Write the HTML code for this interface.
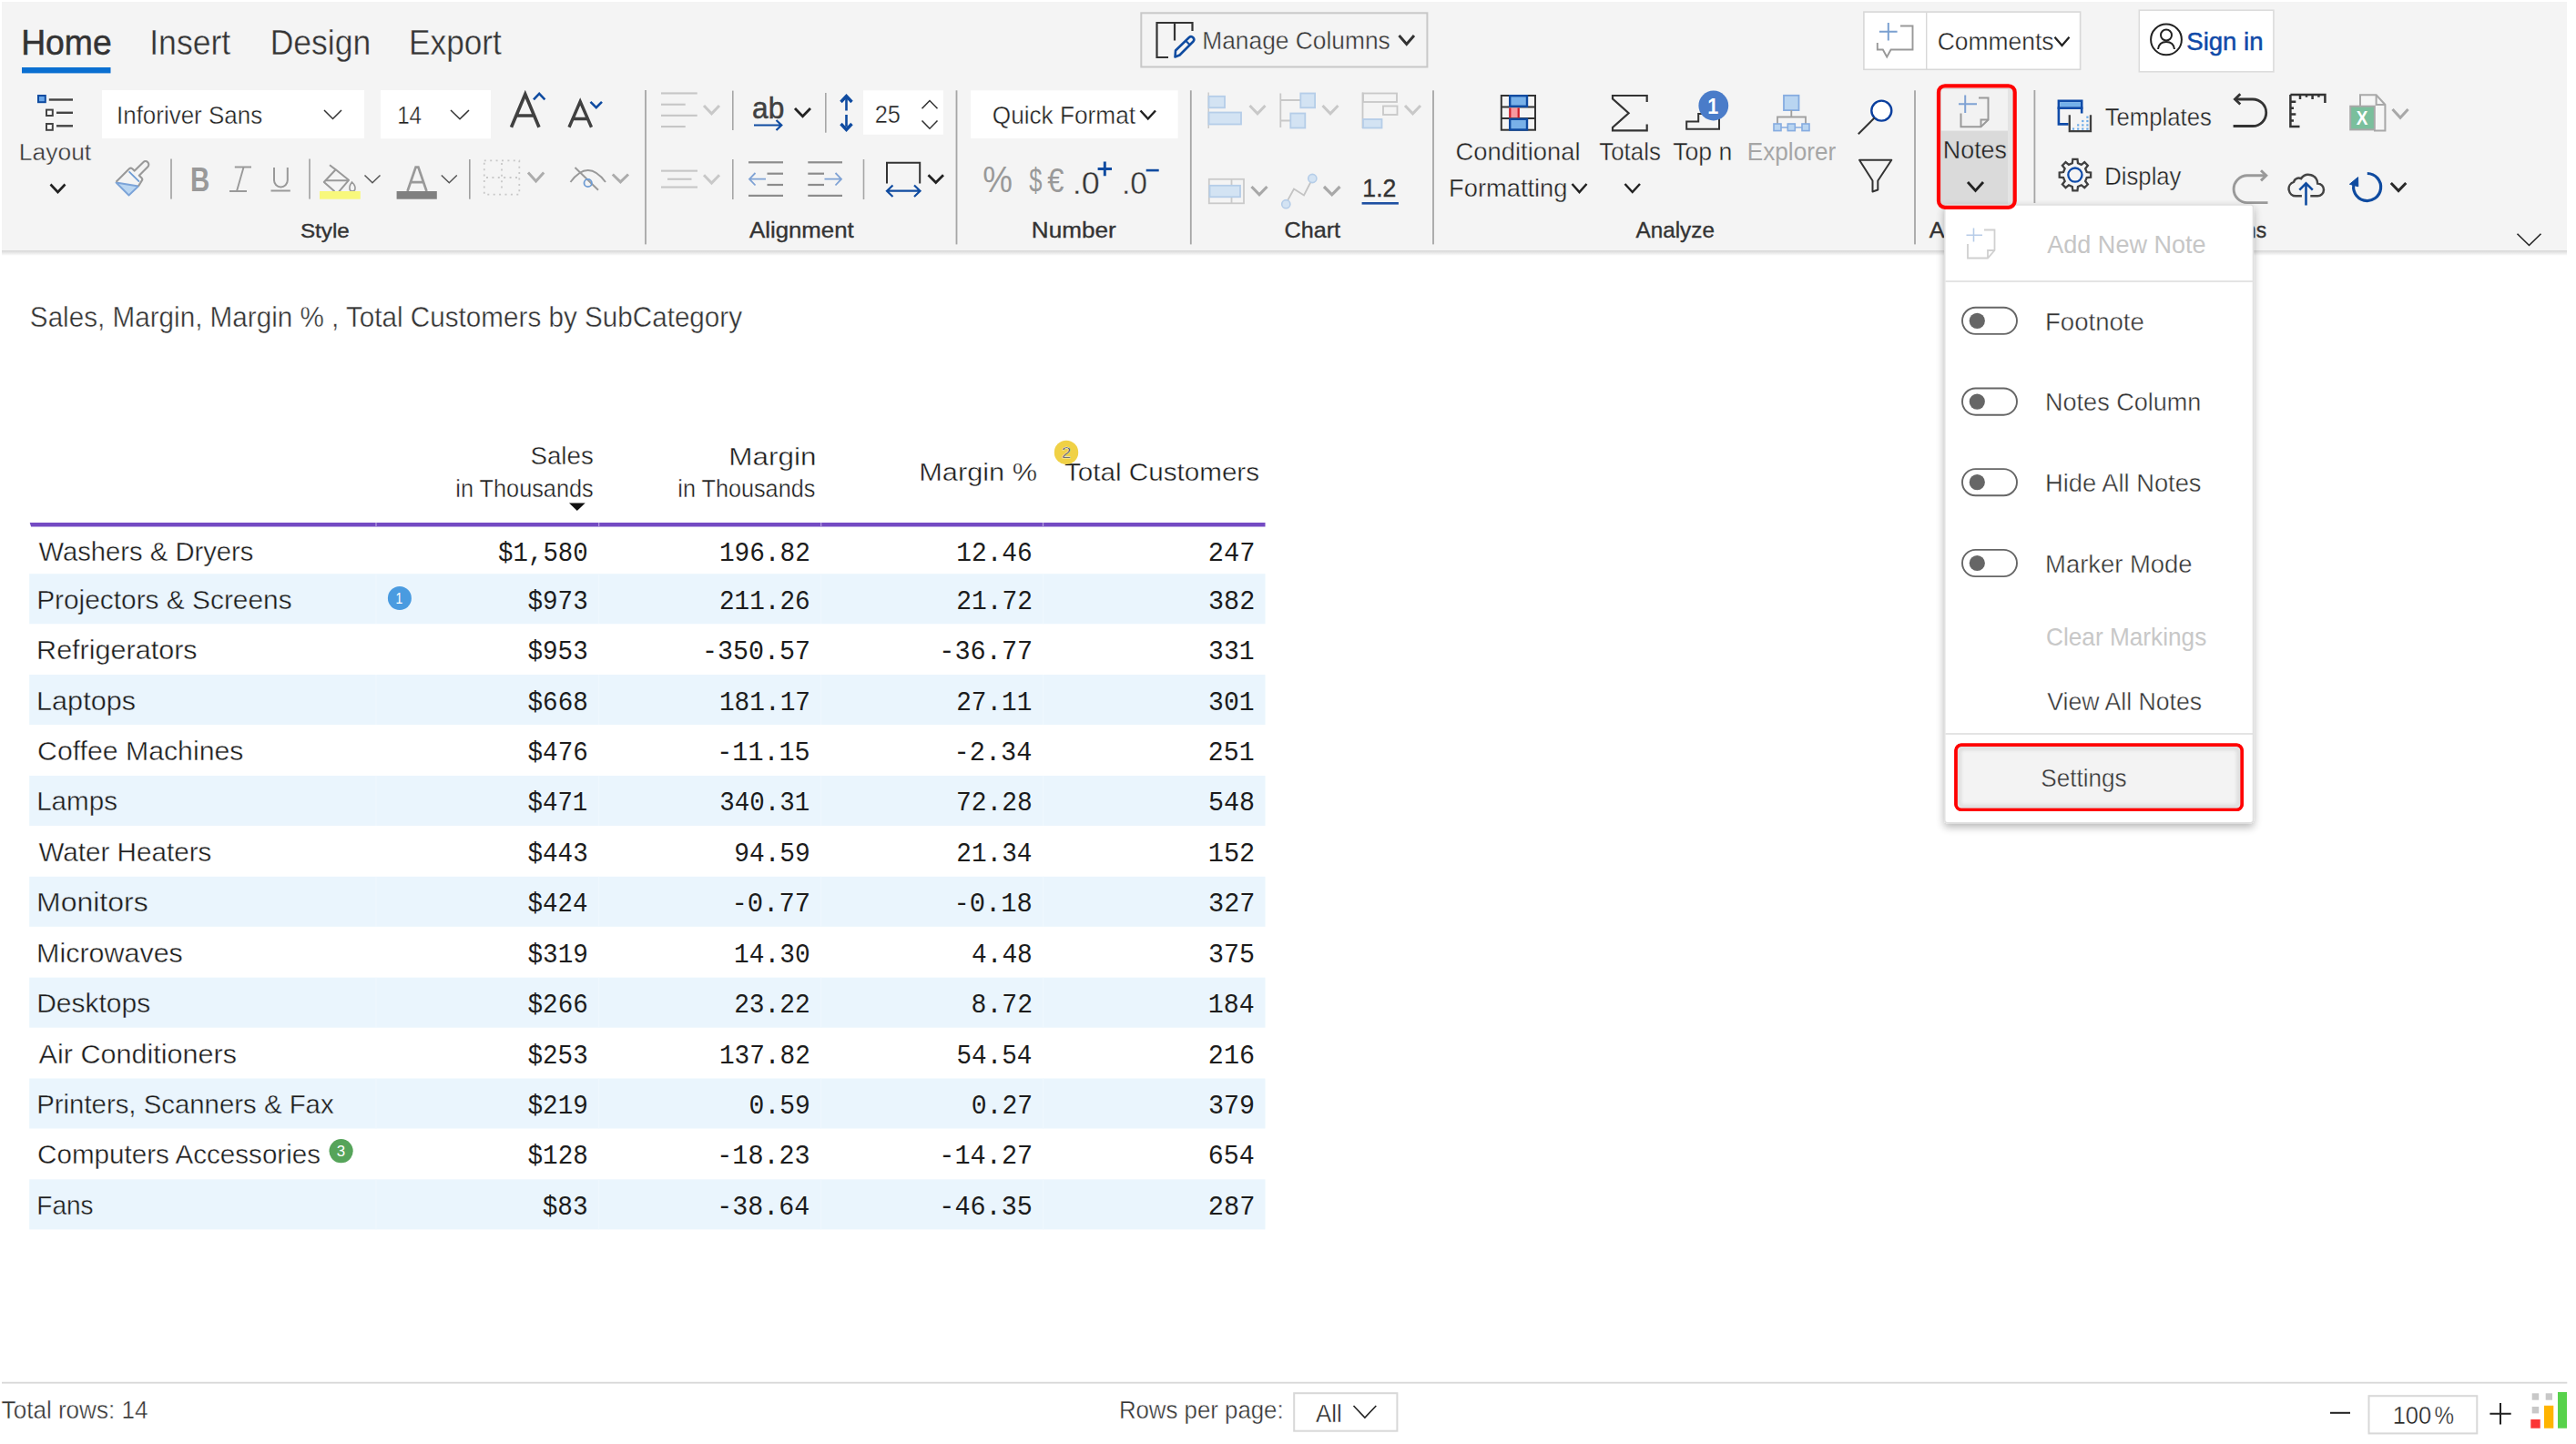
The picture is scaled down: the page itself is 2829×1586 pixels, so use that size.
<!DOCTYPE html><html><head><meta charset="utf-8"><title>Inforiver Notes</title><style>html,body{margin:0;padding:0;background:#fff;width:2829px;height:1586px;overflow:hidden;font-family:"Liberation Sans",sans-serif}</style></head><body><svg width="2829" height="1586" viewBox="0 0 2829 1586" style="display:block;position:absolute;left:0;top:0"><rect x="0.00" y="0.00" width="2829.00" height="1586.00" fill="#ffffff" stroke="none" stroke-width="1.00" rx="0.00"/>
<defs><linearGradient id="shd" x1="0" y1="0" x2="0" y2="1"><stop offset="0" stop-color="#000" stop-opacity="0.16"/><stop offset="1" stop-color="#000" stop-opacity="0"/></linearGradient><filter id="pshadow" x="-20%" y="-10%" width="140%" height="125%"><feGaussianBlur in="SourceAlpha" stdDeviation="5"/><feOffset dx="0" dy="4"/><feComponentTransfer><feFuncA type="linear" slope="0.3"/></feComponentTransfer><feMerge><feMergeNode/><feMergeNode in="SourceGraphic"/></feMerge></filter></defs>
<rect x="2.00" y="2.00" width="2817.00" height="273.00" fill="#f4f4f4" stroke="none" stroke-width="1.00" rx="0.00"/>
<rect x="2.00" y="275.00" width="2817.00" height="6.00" fill="url(#shd)" stroke="none" stroke-width="1.00" rx="0.00"/>
<text x="23.14" y="60.30" font-family='"Liberation Sans", sans-serif' font-weight="400" font-size="38.52" fill="#333333" textLength="99.52" lengthAdjust="spacingAndGlyphs" stroke="#333" stroke-width="0.55">Home</text>
<rect x="24.00" y="74.00" width="97.50" height="6.40" fill="#0a6fd1" stroke="none" stroke-width="1.00" rx="0.00"/>
<text x="164.21" y="60.30" font-family='"Liberation Sans", sans-serif' font-weight="400" font-size="38.52" fill="#333333" textLength="89.05" lengthAdjust="spacingAndGlyphs" stroke="#f4f4f4" stroke-width="0.40">Insert</text>
<text x="296.68" y="60.30" font-family='"Liberation Sans", sans-serif' font-weight="400" font-size="38.52" fill="#333333" textLength="110.62" lengthAdjust="spacingAndGlyphs" stroke="#f4f4f4" stroke-width="0.40">Design</text>
<text x="449.11" y="60.30" font-family='"Liberation Sans", sans-serif' font-weight="400" font-size="38.52" fill="#333333" textLength="101.75" lengthAdjust="spacingAndGlyphs" stroke="#f4f4f4" stroke-width="0.40">Export</text>
<rect x="1253.30" y="14.30" width="314.10" height="59.20" fill="#f4f4f4" stroke="#c8c8c8" stroke-width="2.00" rx="0.00"/>
<path d="M1283 63H1270.5V25H1309.5V34M1290 25V44.5" stroke="#333333" stroke-width="2.20" fill="none"/>
<path d="M1290.5 62.5L1291 55.5L1306 41A3.2 3.2 0 0 1 1310.5 45.5L1295.5 60.5Z" stroke="#0f4ba0" stroke-width="2.60" fill="none" stroke-linejoin="round"/>
<path d="M1302 44.5L1307 49.5" stroke="#0f4ba0" stroke-width="2.20" fill="none"/>
<text x="1320.24" y="53.80" font-family='"Liberation Sans", sans-serif' font-weight="400" font-size="27.62" fill="#333333" textLength="206.51" lengthAdjust="spacingAndGlyphs" stroke="#f4f4f4" stroke-width="0.40">Manage Columns</text>
<path d="M1536.50 39.00L1544.75 48.50L1553.00 39.00" stroke="#333333" stroke-width="3.00" fill="none" stroke-linecap="butt" stroke-linejoin="miter"/>
<rect x="2046.90" y="13.10" width="237.70" height="63.20" fill="#ffffff" stroke="#d8d8d8" stroke-width="1.60" rx="0.00"/>
<rect x="2115.00" y="14.00" width="1.40" height="62.00" fill="#d8d8d8" stroke="none" stroke-width="1.00" rx="0.00"/>
<path d="M2073.8 25V44.5M2063.9 34.8H2083.6" stroke="#7aa0d0" stroke-width="2.00" fill="none"/>
<path d="M2087 28.5H2100.5V54.5H2076.6L2072.2 62.5L2067.8 54.5H2061.8V47" stroke="#999" stroke-width="1.90" fill="none" stroke-linejoin="miter"/>
<text x="2127.66" y="54.80" font-family='"Liberation Sans", sans-serif' font-weight="400" font-size="27.62" fill="#222" textLength="127.80" lengthAdjust="spacingAndGlyphs" stroke="#ffffff" stroke-width="0.40">Comments</text>
<path d="M2256.50 40.80L2264.50 50.00L2272.50 40.80" stroke="#222" stroke-width="2.30" fill="none" stroke-linecap="butt" stroke-linejoin="miter"/>
<rect x="2349.30" y="11.20" width="147.60" height="67.60" fill="#ffffff" stroke="#dcdcdc" stroke-width="1.60" rx="0.00"/>
<circle cx="2379" cy="43.4" r="16.9" fill="none" stroke="#222" stroke-width="2"/>
<circle cx="2379" cy="38.5" r="6" fill="none" stroke="#222" stroke-width="2"/>
<path d="M2370 54Q2371 46 2379 46Q2387 46 2388 54" stroke="#222" stroke-width="2.00" fill="none"/>
<text x="2401.25" y="55.20" font-family='"Liberation Sans", sans-serif' font-weight="400" font-size="28.20" fill="#0f4aa8" textLength="84.24" lengthAdjust="spacingAndGlyphs" stroke="#0f4aa8" stroke-width="0.5">Sign in</text>
<rect x="42.00" y="105.00" width="7.80" height="7.20" fill="#6aa6e8" stroke="#0f4ba0" stroke-width="2.00" rx="0.00"/>
<rect x="53.80" y="108.30" width="26.20" height="2.40" fill="#444" stroke="none" stroke-width="1.00" rx="0.00"/>
<rect x="51.00" y="120.60" width="6.80" height="6.40" fill="#fff" stroke="#444" stroke-width="2.00" rx="0.00"/>
<rect x="62.00" y="122.60" width="18.00" height="2.40" fill="#444" stroke="none" stroke-width="1.00" rx="0.00"/>
<rect x="51.00" y="136.00" width="6.80" height="6.80" fill="#fff" stroke="#444" stroke-width="2.00" rx="0.00"/>
<rect x="62.00" y="137.10" width="18.00" height="2.40" fill="#444" stroke="none" stroke-width="1.00" rx="0.00"/>
<text x="20.83" y="176.00" font-family='"Liberation Sans", sans-serif' font-weight="400" font-size="26.45" fill="#333333" textLength="79.36" lengthAdjust="spacingAndGlyphs" stroke="#f4f4f4" stroke-width="0.40">Layout</text>
<path d="M55.50 202.50L63.50 211.00L71.50 202.50" stroke="#222" stroke-width="2.60" fill="none" stroke-linecap="butt" stroke-linejoin="miter"/>
<rect x="112.00" y="99.00" width="288.00" height="53.00" fill="#ffffff" stroke="none" stroke-width="1.00" rx="0.00"/>
<text x="128.00" y="135.70" font-family='"Liberation Sans", sans-serif' font-weight="400" font-size="27.91" fill="#222" textLength="160.13" lengthAdjust="spacingAndGlyphs" stroke="#ffffff" stroke-width="0.40">Inforiver Sans</text>
<path d="M356.00 121.00L365.50 130.50L375.00 121.00" stroke="#333" stroke-width="1.50" fill="none" stroke-linecap="butt" stroke-linejoin="miter"/>
<rect x="418.00" y="99.00" width="121.00" height="53.30" fill="#ffffff" stroke="none" stroke-width="1.00" rx="0.00"/>
<text x="436.15" y="136.00" font-family='"Liberation Sans", sans-serif' font-weight="400" font-size="27.62" fill="#222" textLength="26.96" lengthAdjust="spacingAndGlyphs" stroke="#ffffff" stroke-width="0.40">14</text>
<path d="M495.00 121.00L505.00 130.80L515.00 121.00" stroke="#333" stroke-width="1.50" fill="none" stroke-linecap="butt" stroke-linejoin="miter"/>
<path d="M561.5 139.7L576.8 103.5L592 139.7M566.8 127H587" stroke="#404040" stroke-width="3.60" fill="none"/>
<path d="M586 109.3L592.2 102.8L598.4 109.3" stroke="#0f4ba0" stroke-width="2.60" fill="none"/>
<path d="M625 139.7L637.2 111.5L649.5 139.7M629 130.5H645.5" stroke="#404040" stroke-width="3.40" fill="none"/>
<path d="M648.5 111.8L654.8 118.2L661 111.8" stroke="#0f4ba0" stroke-width="2.60" fill="none"/>
<path d="M127.5 200.5L152 204.5L141.5 214.5Z" stroke="#7ba3d8" stroke-width="1.80" fill="#b9d5f1" stroke-linejoin="round"/>
<path d="M127.5 199.8L142 185.3Q143.6 184 145.2 185.3L147.8 187.6L157.3 178.2A3.5 3.5 0 0 1 162.3 183.2L152.8 192.7L155.6 195.4Q157 197 155.6 198.6L152 204.5" stroke="#999" stroke-width="2.10" fill="none" stroke-linejoin="round"/>
<path d="M141.6 188.3L153 199.6" stroke="#6d9bd3" stroke-width="1.80" fill="none"/>
<rect x="187.20" y="174.50" width="1.60" height="44.10" fill="#a0a0a0" stroke="none" stroke-width="1.00" rx="0.00"/>
<text x="209.03" y="209.50" font-family='"Liberation Sans", sans-serif' font-weight="700" font-size="37.06" fill="#999" textLength="21.31" lengthAdjust="spacingAndGlyphs">B</text>
<path d="M257.8 183.5H276M252 210H271M267.6 183.5L260 210" stroke="#999" stroke-width="1.90" fill="none"/>
<path d="M301 184V198A7.4 7.4 0 0 0 315.8 198V184M297.5 209.5H318.8" stroke="#999" stroke-width="2.00" fill="none"/>
<rect x="339.20" y="174.50" width="1.60" height="44.10" fill="#a0a0a0" stroke="none" stroke-width="1.00" rx="0.00"/>
<path d="M367.5 210.3L355.8 200L368.7 186.2L383 197.8L372.3 210.3" stroke="#999" stroke-width="2.00" fill="none" stroke-linejoin="round"/>
<path d="M357.5 198.3H382.5M362 181.2L368.7 186.4" stroke="#999" stroke-width="2.00" fill="none"/>
<path d="M386.5 200Q383.5 204 384 207A3 3 0 0 0 390 207Q390.5 204 386.5 200Z" stroke="#999" stroke-width="1.60" fill="none"/>
<rect x="351.00" y="210.00" width="44.80" height="8.70" fill="#f8f87c" stroke="none" stroke-width="1.00" rx="0.00"/>
<path d="M400.50 192.50L409.00 200.80L417.50 192.50" stroke="#555" stroke-width="1.50" fill="none" stroke-linecap="butt" stroke-linejoin="miter"/>
<path d="M447.5 210L456.6 183.6H459.4L468.5 210M450.5 200.2H465.5" stroke="#999" stroke-width="2.70" fill="none"/>
<rect x="435.60" y="210.00" width="44.20" height="8.70" fill="#808080" stroke="none" stroke-width="1.00" rx="0.00"/>
<path d="M484.80 192.50L493.30 200.80L501.80 192.50" stroke="#555" stroke-width="1.50" fill="none" stroke-linecap="butt" stroke-linejoin="miter"/>
<rect x="515.00" y="175.00" width="1.60" height="43.70" fill="#a0a0a0" stroke="none" stroke-width="1.00" rx="0.00"/>
<rect x="531.80" y="176.40" width="38.50" height="37.30" fill="none" stroke="#c8c8c8" stroke-width="1.80" rx="0.00" stroke-dasharray="2 4.4"/>
<path d="M551 179V211M534 195H568" stroke="#c8c8c8" stroke-width="1.80" fill="none" stroke-dasharray="2 4.4"/>
<path d="M580.00 189.50L588.60 199.00L597.20 189.50" stroke="#acacac" stroke-width="3.00" fill="none" stroke-linecap="butt" stroke-linejoin="miter"/>
<path d="M626.5 200Q645.7 174 665 200" stroke="#999" stroke-width="1.90" fill="none"/>
<path d="M631.5 184L657 208.8" stroke="#999" stroke-width="1.90" fill="none"/>
<circle cx="645.7" cy="201" r="4.2" fill="none" stroke="#6d9bd3" stroke-width="1.8"/>
<path d="M672.80 191.50L681.40 199.80L690.00 191.50" stroke="#acacac" stroke-width="3.00" fill="none" stroke-linecap="butt" stroke-linejoin="miter"/>
<text x="329.90" y="260.50" font-family='"Liberation Sans", sans-serif' font-weight="400" font-size="22.67" fill="#333333" textLength="53.98" lengthAdjust="spacingAndGlyphs" stroke="#333" stroke-width="0.35">Style</text>
<rect x="708.10" y="99.00" width="1.80" height="169.40" fill="#a6a6a6" stroke="none" stroke-width="1.00" rx="0.00"/>
<rect x="726.00" y="101.40" width="39.70" height="2.10" fill="#c6c6c6" stroke="none" stroke-width="1.00" rx="0.00"/>
<rect x="726.00" y="113.70" width="26.70" height="2.10" fill="#c6c6c6" stroke="none" stroke-width="1.00" rx="0.00"/>
<rect x="726.00" y="125.80" width="39.70" height="2.10" fill="#c6c6c6" stroke="none" stroke-width="1.00" rx="0.00"/>
<rect x="726.00" y="138.00" width="26.70" height="2.10" fill="#c6c6c6" stroke="none" stroke-width="1.00" rx="0.00"/>
<path d="M773.00 116.00L781.50 124.80L790.00 116.00" stroke="#c8c8c8" stroke-width="3.00" fill="none" stroke-linecap="butt" stroke-linejoin="miter"/>
<rect x="804.00" y="99.60" width="1.60" height="43.40" fill="#a6a6a6" stroke="none" stroke-width="1.00" rx="0.00"/>
<text x="826.05" y="129.60" font-family='"Liberation Sans", sans-serif' font-weight="400" font-size="33.43" fill="#404040" textLength="35.28" lengthAdjust="spacingAndGlyphs" stroke="#404040" stroke-width="0.5">ab</text>
<path d="M828 137.5H858M852.5 132L858.3 137.5L852.5 143" stroke="#0f4ba0" stroke-width="2.20" fill="none"/>
<path d="M873.00 119.00L881.50 127.80L890.00 119.00" stroke="#222" stroke-width="2.80" fill="none" stroke-linecap="butt" stroke-linejoin="miter"/>
<rect x="906.00" y="102.00" width="1.60" height="43.70" fill="#a6a6a6" stroke="none" stroke-width="1.00" rx="0.00"/>
<path d="M929.5 108V121.5M929.5 126V139.5" stroke="#0f4ba0" stroke-width="2.60" fill="none"/>
<path d="M923.5 112L929.5 105.5L935.5 112M923.5 136L929.5 142.5L935.5 136" stroke="#0f4ba0" stroke-width="3.40" fill="none"/>
<rect x="948.00" y="99.30" width="88.00" height="48.50" fill="#ffffff" stroke="none" stroke-width="1.00" rx="0.00"/>
<text x="960.72" y="135.20" font-family='"Liberation Sans", sans-serif' font-weight="400" font-size="27.91" fill="#222" textLength="28.24" lengthAdjust="spacingAndGlyphs" stroke="#ffffff" stroke-width="0.40">25</text>
<path d="M1012.5 119.3L1021 110.5L1029.5 119.3M1012.5 132.5L1021 141.2L1029.5 132.5" stroke="#333" stroke-width="1.50" fill="none"/>
<rect x="1049.60" y="99.30" width="1.80" height="169.10" fill="#a6a6a6" stroke="none" stroke-width="1.00" rx="0.00"/>
<rect x="726.00" y="186.60" width="40.00" height="2.10" fill="#c6c6c6" stroke="none" stroke-width="1.00" rx="0.00"/>
<rect x="733.00" y="195.70" width="26.50" height="2.10" fill="#c6c6c6" stroke="none" stroke-width="1.00" rx="0.00"/>
<rect x="726.00" y="204.50" width="40.00" height="2.10" fill="#c6c6c6" stroke="none" stroke-width="1.00" rx="0.00"/>
<path d="M773.00 192.30L781.50 201.00L790.00 192.30" stroke="#c8c8c8" stroke-width="3.00" fill="none" stroke-linecap="butt" stroke-linejoin="miter"/>
<rect x="804.00" y="175.00" width="1.60" height="44.00" fill="#a6a6a6" stroke="none" stroke-width="1.00" rx="0.00"/>
<rect x="822.00" y="177.20" width="38.00" height="2.20" fill="#8c8c8c" stroke="none" stroke-width="1.00" rx="0.00"/>
<rect x="842.50" y="189.60" width="17.50" height="2.20" fill="#8c8c8c" stroke="none" stroke-width="1.00" rx="0.00"/>
<rect x="842.50" y="201.90" width="17.50" height="2.20" fill="#8c8c8c" stroke="none" stroke-width="1.00" rx="0.00"/>
<rect x="822.00" y="213.80" width="38.00" height="2.20" fill="#8c8c8c" stroke="none" stroke-width="1.00" rx="0.00"/>
<path d="M823 196.7H841M829.5 190L823 196.7L829.5 203.5" stroke="#7fa2d4" stroke-width="1.80" fill="none"/>
<rect x="887.30" y="177.20" width="37.70" height="2.20" fill="#8c8c8c" stroke="none" stroke-width="1.00" rx="0.00"/>
<rect x="887.30" y="189.60" width="17.70" height="2.20" fill="#8c8c8c" stroke="none" stroke-width="1.00" rx="0.00"/>
<rect x="887.30" y="201.90" width="17.70" height="2.20" fill="#8c8c8c" stroke="none" stroke-width="1.00" rx="0.00"/>
<rect x="887.30" y="213.80" width="37.70" height="2.20" fill="#8c8c8c" stroke="none" stroke-width="1.00" rx="0.00"/>
<path d="M905.5 196.7H924M917.5 190L924 196.7L917.5 203.5" stroke="#7fa2d4" stroke-width="1.80" fill="none"/>
<rect x="947.70" y="175.00" width="1.60" height="44.00" fill="#a6a6a6" stroke="none" stroke-width="1.00" rx="0.00"/>
<path d="M974 201.5V178.7H1010.2V201.5" stroke="#333" stroke-width="2.00" fill="none"/>
<path d="M974.5 209.7H1010M980.5 203.5L974 209.7L980.5 216M1004 203.5L1010.5 209.7L1004 216" stroke="#0f4ba0" stroke-width="2.20" fill="none"/>
<path d="M1019.50 192.30L1027.75 200.50L1036.00 192.30" stroke="#222" stroke-width="2.80" fill="none" stroke-linecap="butt" stroke-linejoin="miter"/>
<text x="822.95" y="261.00" font-family='"Liberation Sans", sans-serif' font-weight="400" font-size="24.42" fill="#333333" textLength="114.84" lengthAdjust="spacingAndGlyphs" stroke="#333" stroke-width="0.35">Alignment</text>
<rect x="1066.00" y="99.30" width="227.60" height="52.70" fill="#ffffff" stroke="none" stroke-width="1.00" rx="0.00"/>
<text x="1089.76" y="135.90" font-family='"Liberation Sans", sans-serif' font-weight="400" font-size="27.62" fill="#222" textLength="157.23" lengthAdjust="spacingAndGlyphs" stroke="#ffffff" stroke-width="0.40">Quick Format</text>
<path d="M1252.50 121.50L1260.75 130.50L1269.00 121.50" stroke="#222" stroke-width="2.50" fill="none" stroke-linecap="butt" stroke-linejoin="miter"/>
<text x="1079.19" y="210.70" font-family='"Liberation Sans", sans-serif' font-weight="400" font-size="41.43" fill="#999" textLength="32.72" lengthAdjust="spacingAndGlyphs">%</text>
<text x="1130.23" y="210.70" font-family='"Liberation Sans", sans-serif' font-weight="400" font-size="37.79" fill="#999" textLength="14.18" lengthAdjust="spacingAndGlyphs">$</text>
<text x="1150.14" y="210.70" font-family='"Liberation Sans", sans-serif' font-weight="400" font-size="37.79" fill="#999" textLength="18.22" lengthAdjust="spacingAndGlyphs">€</text>
<text x="1177.72" y="212.80" font-family='"Liberation Sans", sans-serif' font-weight="400" font-size="35.61" fill="#333" textLength="29.99" lengthAdjust="spacingAndGlyphs" stroke="#f4f4f4" stroke-width="0.40">.0</text>
<path d="M1205.6 185.5H1221M1213.3 177.5V193.3" stroke="#0f4ba0" stroke-width="3.00" fill="none"/>
<text x="1231.92" y="212.80" font-family='"Liberation Sans", sans-serif' font-weight="400" font-size="35.61" fill="#333" textLength="28.09" lengthAdjust="spacingAndGlyphs" stroke="#f4f4f4" stroke-width="0.40">.0</text>
<rect x="1258.70" y="185.80" width="14.00" height="2.60" fill="#0f4ba0" stroke="none" stroke-width="1.00" rx="0.00"/>
<text x="1132.86" y="261.00" font-family='"Liberation Sans", sans-serif' font-weight="400" font-size="24.42" fill="#333333" textLength="92.77" lengthAdjust="spacingAndGlyphs" stroke="#333" stroke-width="0.35">Number</text>
<rect x="1306.90" y="99.30" width="1.80" height="169.10" fill="#a6a6a6" stroke="none" stroke-width="1.00" rx="0.00"/>
<rect x="1326.50" y="101.50" width="1.40" height="39.50" fill="#c8c8c8" stroke="none" stroke-width="1.00" rx="0.00"/>
<rect x="1327.50" y="105.80" width="17.50" height="12.50" fill="#d3e3f3" stroke="#b5cde8" stroke-width="1.80" rx="0.00"/>
<rect x="1327.50" y="123.50" width="35.50" height="13.00" fill="#d3e3f3" stroke="#b5cde8" stroke-width="1.80" rx="0.00"/>
<path d="M1372.50 116.00L1381.00 124.80L1389.50 116.00" stroke="#c8c8c8" stroke-width="3.00" fill="none" stroke-linecap="butt" stroke-linejoin="miter"/>
<path d="M1406.3 102.5V140M1406.3 110H1428M1406.3 132.5H1417" stroke="#c8c8c8" stroke-width="1.80" fill="none"/>
<rect x="1428.30" y="102.50" width="15.80" height="15.80" fill="#d3e3f3" stroke="#b5cde8" stroke-width="1.80" rx="0.00"/>
<rect x="1417.30" y="124.50" width="16.00" height="16.00" fill="#d3e3f3" stroke="#b5cde8" stroke-width="1.80" rx="0.00"/>
<path d="M1452.50 116.00L1461.00 124.80L1469.50 116.00" stroke="#c8c8c8" stroke-width="3.00" fill="none" stroke-linecap="butt" stroke-linejoin="miter"/>
<path d="M1496.5 101.5V141" stroke="#c8c8c8" stroke-width="1.80" fill="none"/>
<rect x="1497.00" y="102.50" width="37.00" height="9.50" fill="none" stroke="#c8c8c8" stroke-width="1.80" rx="0.00"/>
<rect x="1519.00" y="116.50" width="15.50" height="9.50" fill="none" stroke="#c8c8c8" stroke-width="1.80" rx="0.00"/>
<rect x="1497.00" y="131.00" width="20.50" height="9.50" fill="#d3e3f3" stroke="#b5cde8" stroke-width="1.80" rx="0.00"/>
<path d="M1543.00 116.00L1551.50 124.80L1560.00 116.00" stroke="#c8c8c8" stroke-width="3.00" fill="none" stroke-linecap="butt" stroke-linejoin="miter"/>
<rect x="1327.80" y="196.80" width="38.20" height="26.50" fill="none" stroke="#cacaca" stroke-width="1.80" rx="0.00"/>
<path d="M1352.5 197V223" stroke="#cacaca" stroke-width="1.80" fill="none"/>
<rect x="1328.50" y="203.80" width="33.50" height="12.50" fill="#d3e3f3" stroke="#b5cde8" stroke-width="1.80" rx="0.00"/>
<path d="M1374.50 205.00L1383.00 213.80L1391.50 205.00" stroke="#a8a8a8" stroke-width="3.20" fill="none" stroke-linecap="butt" stroke-linejoin="miter"/>
<path d="M1412 224L1421 207.5L1432 214.5L1441.5 196" stroke="#c4c4c4" stroke-width="1.80" fill="none"/>
<circle cx="1412.3" cy="224.2" r="4.6" fill="#d3e3f3" stroke="#b5cde8" stroke-width="1.6"/>
<circle cx="1441.3" cy="196" r="4.6" fill="#d3e3f3" stroke="#b5cde8" stroke-width="1.6"/>
<path d="M1454.00 205.00L1462.75 213.80L1471.50 205.00" stroke="#a8a8a8" stroke-width="3.20" fill="none" stroke-linecap="butt" stroke-linejoin="miter"/>
<text x="1496.37" y="215.60" font-family='"Liberation Sans", sans-serif' font-weight="400" font-size="27.47" fill="#333" textLength="36.96" lengthAdjust="spacingAndGlyphs" stroke="#333" stroke-width="0.4">1.2</text>
<rect x="1495.60" y="222.00" width="40.30" height="2.60" fill="#1e50a2" stroke="none" stroke-width="1.00" rx="0.00"/>
<text x="1410.52" y="261.00" font-family='"Liberation Sans", sans-serif' font-weight="400" font-size="24.42" fill="#333333" textLength="61.56" lengthAdjust="spacingAndGlyphs" stroke="#333" stroke-width="0.35">Chart</text>
<rect x="1573.10" y="99.30" width="1.80" height="169.10" fill="#a6a6a6" stroke="none" stroke-width="1.00" rx="0.00"/>
<rect x="1648.80" y="105.00" width="37.20" height="37.70" fill="none" stroke="#333" stroke-width="2.00" rx="0.00"/>
<path d="M1648.8 117.6H1686M1648.8 130H1686" stroke="#333" stroke-width="2.00" fill="none"/>
<rect x="1658.20" y="105.20" width="18.80" height="11.60" fill="#78b1e8" stroke="#0f4ba0" stroke-width="2.40" rx="0.00"/>
<rect x="1658.20" y="130.80" width="18.80" height="11.70" fill="#78b1e8" stroke="#0f4ba0" stroke-width="2.40" rx="0.00"/>
<rect x="1657.50" y="118.50" width="11.30" height="10.70" fill="#f79aa0" stroke="none" stroke-width="1.00" rx="0.00"/>
<rect x="1657.20" y="118.50" width="2.20" height="10.70" fill="#d0202a" stroke="none" stroke-width="1.00" rx="0.00"/>
<rect x="1666.60" y="118.50" width="2.20" height="10.70" fill="#d0202a" stroke="none" stroke-width="1.00" rx="0.00"/>
<text x="1598.61" y="175.70" font-family='"Liberation Sans", sans-serif' font-weight="400" font-size="27.33" fill="#222" textLength="136.92" lengthAdjust="spacingAndGlyphs" stroke="#f4f4f4" stroke-width="0.40">Conditional</text>
<text x="1591.06" y="215.50" font-family='"Liberation Sans", sans-serif' font-weight="400" font-size="27.33" fill="#222" textLength="130.40" lengthAdjust="spacingAndGlyphs" stroke="#f4f4f4" stroke-width="0.40">Formatting</text>
<path d="M1726.50 202.00L1734.50 211.00L1742.50 202.00" stroke="#222" stroke-width="2.50" fill="none" stroke-linecap="butt" stroke-linejoin="miter"/>
<path d="M1808.7 112V105H1771V108.5L1788.6 124.3L1771 140V143.4H1808.7V136.5" stroke="#333" stroke-width="2.20" fill="none" stroke-linejoin="miter"/>
<text x="1756.24" y="175.70" font-family='"Liberation Sans", sans-serif' font-weight="400" font-size="27.33" fill="#222" textLength="67.66" lengthAdjust="spacingAndGlyphs" stroke="#f4f4f4" stroke-width="0.40">Totals</text>
<path d="M1784.50 202.00L1792.75 211.00L1801.00 202.00" stroke="#222" stroke-width="2.50" fill="none" stroke-linecap="butt" stroke-linejoin="miter"/>
<path d="M1880 125H1865.2V133.6H1852.2V141.8H1888V128" stroke="#333" stroke-width="2.00" fill="none" stroke-linejoin="miter"/>
<circle cx="1881.8" cy="116" r="16.4" fill="#4a7cc9"/>
<text x="1875.15" y="124.50" font-family='"Liberation Sans", sans-serif' font-weight="700" font-size="24.71" fill="#ffffff" textLength="11.95" lengthAdjust="spacingAndGlyphs">1</text>
<text x="1837.23" y="175.70" font-family='"Liberation Sans", sans-serif' font-weight="400" font-size="27.33" fill="#222" textLength="65.13" lengthAdjust="spacingAndGlyphs" stroke="#f4f4f4" stroke-width="0.40">Top n</text>
<rect x="1959.00" y="104.80" width="16.50" height="16.30" fill="#b9d5f1" stroke="#86ace0" stroke-width="1.80" rx="0.00"/>
<path d="M1967.3 121V128.5M1952 136V128.5H1983V136" stroke="#a0a0a0" stroke-width="1.80" fill="none"/>
<rect x="1948.00" y="136.00" width="8.00" height="7.60" fill="#b9d5f1" stroke="#86ace0" stroke-width="1.60" rx="0.00"/>
<rect x="1963.30" y="136.00" width="8.00" height="7.60" fill="#b9d5f1" stroke="#86ace0" stroke-width="1.60" rx="0.00"/>
<rect x="1979.00" y="136.00" width="8.00" height="7.60" fill="#b9d5f1" stroke="#86ace0" stroke-width="1.60" rx="0.00"/>
<path d="M1956 140H1963M1971 140H1979" stroke="#86ace0" stroke-width="1.60" fill="none"/>
<text x="1918.86" y="176.00" font-family='"Liberation Sans", sans-serif' font-weight="400" font-size="28.20" fill="#a6a6a6" textLength="97.28" lengthAdjust="spacingAndGlyphs">Explorer</text>
<circle cx="2066.3" cy="121.6" r="11" fill="#ffffff" stroke="#0a3f9e" stroke-width="2.4"/>
<path d="M2040.8 147.2L2058.5 129.5" stroke="#333" stroke-width="2.00" fill="none"/>
<path d="M2042 175.8H2077.3L2062.3 198.5V208.5L2056.5 210.5L2056.5 198.5Z" stroke="#333" stroke-width="2.00" fill="none" stroke-linejoin="round"/>
<text x="1796.55" y="261.00" font-family='"Liberation Sans", sans-serif' font-weight="400" font-size="24.42" fill="#333333" textLength="86.33" lengthAdjust="spacingAndGlyphs" stroke="#333" stroke-width="0.35">Analyze</text>
<rect x="2102.10" y="99.30" width="1.80" height="169.10" fill="#a6a6a6" stroke="none" stroke-width="1.00" rx="0.00"/>
<rect x="2131.00" y="97.00" width="80.00" height="129.00" fill="#dadada" stroke="none" stroke-width="1.00" rx="0.00"/>
<rect x="2132.00" y="98.00" width="75.00" height="45.60" fill="#f2f2f2" stroke="none" stroke-width="1.00" rx="0.00"/>
<rect x="2205.00" y="98.00" width="6.00" height="126.00" fill="#e4e4e4" stroke="none" stroke-width="1.00" rx="0.00"/>
<path d="M2158.2 104.5V124M2151 114.3H2171" stroke="#7fa2d4" stroke-width="2.00" fill="none"/>
<path d="M2173 107.5H2183.5V131.5L2175.5 139.3H2153.5V124.5" stroke="#9a9a9a" stroke-width="2.00" fill="none" stroke-linejoin="miter"/>
<path d="M2175.5 139.3V131.5H2183.5" stroke="#9a9a9a" stroke-width="2.00" fill="none"/>
<text x="2133.80" y="174.00" font-family='"Liberation Sans", sans-serif' font-weight="400" font-size="27.04" fill="#222" textLength="70.17" lengthAdjust="spacingAndGlyphs" stroke="#dadada" stroke-width="0.40">Notes</text>
<path d="M2161.00 200.00L2169.50 209.50L2178.00 200.00" stroke="#222" stroke-width="2.80" fill="none" stroke-linecap="butt" stroke-linejoin="miter"/>
<rect x="2233.50" y="99.00" width="1.80" height="124.00" fill="#a6a6a6" stroke="none" stroke-width="1.00" rx="0.00"/>
<text x="2118.65" y="261.00" font-family='"Liberation Sans", sans-serif' font-weight="400" font-size="24.42" fill="#333333" textLength="16.90" lengthAdjust="spacingAndGlyphs" stroke="#333" stroke-width="0.35">A</text>
<text x="2464.98" y="261.00" font-family='"Liberation Sans", sans-serif' font-weight="400" font-size="24.13" fill="#333333" textLength="24.14" lengthAdjust="spacingAndGlyphs" stroke="#333" stroke-width="0.35">ns</text>
<path d="M2271.6 136.4H2260.9V110.9H2286.2V124.5" stroke="#0f4ba8" stroke-width="2.60" fill="none"/>
<rect x="2262.20" y="112.20" width="22.80" height="5.30" fill="#74b0ea" stroke="none" stroke-width="1.00" rx="0.00"/>
<rect x="2259.60" y="117.30" width="27.80" height="2.70" fill="#0f4ba8" stroke="none" stroke-width="1.00" rx="0.00"/>
<path d="M2272.8 126.2V144.2H2296V126.2" stroke="#404040" stroke-width="2.30" fill="none"/>
<rect x="2291.30" y="127.60" width="2.20" height="2.20" fill="#6aaae8" stroke="none" stroke-width="1.00" rx="0.00"/>
<rect x="2286.20" y="131.90" width="2.20" height="2.20" fill="#6aaae8" stroke="none" stroke-width="1.00" rx="0.00"/>
<rect x="2291.30" y="131.90" width="2.20" height="2.20" fill="#6aaae8" stroke="none" stroke-width="1.00" rx="0.00"/>
<rect x="2281.10" y="136.30" width="2.20" height="2.20" fill="#6aaae8" stroke="none" stroke-width="1.00" rx="0.00"/>
<rect x="2286.20" y="136.30" width="2.20" height="2.20" fill="#6aaae8" stroke="none" stroke-width="1.00" rx="0.00"/>
<rect x="2291.30" y="136.30" width="2.20" height="2.20" fill="#6aaae8" stroke="none" stroke-width="1.00" rx="0.00"/>
<rect x="2275.90" y="140.50" width="2.20" height="2.20" fill="#6aaae8" stroke="none" stroke-width="1.00" rx="0.00"/>
<rect x="2281.10" y="140.50" width="2.20" height="2.20" fill="#6aaae8" stroke="none" stroke-width="1.00" rx="0.00"/>
<rect x="2286.20" y="140.50" width="2.20" height="2.20" fill="#6aaae8" stroke="none" stroke-width="1.00" rx="0.00"/>
<rect x="2291.30" y="140.50" width="2.20" height="2.20" fill="#6aaae8" stroke="none" stroke-width="1.00" rx="0.00"/>
<text x="2311.64" y="138.00" font-family='"Liberation Sans", sans-serif' font-weight="400" font-size="26.89" fill="#222" textLength="117.27" lengthAdjust="spacingAndGlyphs" stroke="#f4f4f4" stroke-width="0.40">Templates</text>
<path d="M2455 109H2474A14.75 14.75 0 0 1 2474 138.5H2452.6" stroke="#333" stroke-width="2.80" fill="none"/>
<path d="M2460.3 103.2L2454.4 109L2460.3 114.6" stroke="#333" stroke-width="2.80" fill="none"/>
<path d="M2515.4 104V139H2525.5M2515.4 104H2553.4V113M2526 104V109M2533 104V106.8M2539.6 104V109M2546.4 104V106.8M2515.4 111.8H2521.3M2515.4 118.8H2519M2515.4 125.4H2521.3M2515.4 132.4H2519" stroke="#333" stroke-width="2.50" fill="none"/>
<path d="M2592 116V104.3H2609.6L2619.4 115V143.4H2607" stroke="#a8a8a8" stroke-width="2.00" fill="#f6f6f6"/>
<path d="M2609.6 104.3V115H2619.4" stroke="#a8a8a8" stroke-width="2.00" fill="none"/>
<rect x="2581.20" y="116.70" width="26.60" height="25.70" fill="#7abf9c" stroke="#a8a8a8" stroke-width="2.00" rx="0.00"/>
<text x="2587.83" y="136.60" font-family='"Liberation Sans", sans-serif' font-weight="700" font-size="21.22" fill="#ffffff" textLength="12.63" lengthAdjust="spacingAndGlyphs">X</text>
<path d="M2627.50 120.00L2636.05 129.30L2644.60 120.00" stroke="#a8a8a8" stroke-width="3.00" fill="none" stroke-linecap="butt" stroke-linejoin="miter"/>
<path d="M2275.82 179.26L2276.33 174.89L2281.47 174.89L2281.98 179.26L2285.80 180.85L2289.25 178.11L2292.89 181.75L2290.15 185.20L2291.74 189.02L2296.11 189.53L2296.11 194.67L2291.74 195.18L2290.15 199.00L2292.89 202.45L2289.25 206.09L2285.80 203.35L2281.98 204.94L2281.47 209.31L2276.33 209.31L2275.82 204.94L2272.00 203.35L2268.55 206.09L2264.91 202.45L2267.65 199.00L2266.06 195.18L2261.69 194.67L2261.69 189.53L2266.06 189.02L2267.65 185.20L2264.91 181.75L2268.55 178.11L2272.00 180.85Z" stroke="#404040" stroke-width="2.30" fill="none" stroke-linejoin="miter"/>
<circle cx="2278.9" cy="192.1" r="7.6" fill="none" stroke="#0f4ba8" stroke-width="2.3"/>
<text x="2311.29" y="203.00" font-family='"Liberation Sans", sans-serif' font-weight="400" font-size="27.33" fill="#222" textLength="84.16" lengthAdjust="spacingAndGlyphs" stroke="#f4f4f4" stroke-width="0.40">Display</text>
<path d="M2488.5 192.8H2468A14.9 14.9 0 0 0 2468 222.6H2490.5" stroke="#999" stroke-width="2.90" fill="none"/>
<path d="M2483 187.3L2488.8 192.8L2483 198.4" stroke="#999" stroke-width="2.90" fill="none"/>
<path d="M2527.9 215.3H2521.5A7.9 7.9 0 0 1 2519 199.9A5.6 5.6 0 0 1 2527 196.2A10 10 0 0 1 2545.2 201.5A6.9 6.9 0 0 1 2545 215.3H2537.3" stroke="#444" stroke-width="2.50" fill="none"/>
<path d="M2532.5 225.5V202M2525.3 208.6L2532.5 201.4L2539.8 208.6" stroke="#0f4ba0" stroke-width="2.60" fill="none"/>
<path d="M2599.8 190.5A15 15 0 1 1 2585.5 200.5" stroke="#0f4ba0" stroke-width="3.20" fill="none"/>
<path d="M2589.6 194.6L2580.4 202.3L2589.8 204.8Z" stroke="#0f4ba0" stroke-width="1.00" fill="#0f4ba0" stroke-linejoin="round"/>
<path d="M2625.80 201.00L2634.05 209.60L2642.30 201.00" stroke="#2a2a2a" stroke-width="3.00" fill="none" stroke-linecap="butt" stroke-linejoin="miter"/>
<path d="M2764.50 256.70L2777.50 269.50L2790.50 256.70" stroke="#222" stroke-width="1.60" fill="none" stroke-linecap="butt" stroke-linejoin="miter"/>
<text x="32.86" y="359.30" font-family='"Liberation Sans", sans-serif' font-weight="400" font-size="31.69" fill="#333" textLength="782.20" lengthAdjust="spacingAndGlyphs" stroke="#ffffff" stroke-width="0.40">Sales, Margin, Margin % , Total Customers by SubCategory</text>
<text x="582.44" y="509.50" font-family='"Liberation Sans", sans-serif' font-weight="400" font-size="28.34" fill="#1c1c1c" textLength="69.36" lengthAdjust="spacingAndGlyphs" stroke="#ffffff" stroke-width="0.40">Sales</text>
<text x="500.31" y="545.60" font-family='"Liberation Sans", sans-serif' font-weight="400" font-size="27.62" fill="#1c1c1c" textLength="151.40" lengthAdjust="spacingAndGlyphs" stroke="#ffffff" stroke-width="0.40">in Thousands</text>
<path d="M625 552.4H642.7L633.8 561Z" stroke="none" stroke-width="1.00" fill="#111"/>
<text x="800.32" y="511.30" font-family='"Liberation Sans", sans-serif' font-weight="400" font-size="28.34" fill="#1c1c1c" textLength="96.12" lengthAdjust="spacingAndGlyphs" stroke="#ffffff" stroke-width="0.40">Margin</text>
<text x="744.32" y="545.60" font-family='"Liberation Sans", sans-serif' font-weight="400" font-size="27.62" fill="#1c1c1c" textLength="150.99" lengthAdjust="spacingAndGlyphs" stroke="#ffffff" stroke-width="0.40">in Thousands</text>
<text x="1009.28" y="527.90" font-family='"Liberation Sans", sans-serif' font-weight="400" font-size="28.34" fill="#1c1c1c" textLength="129.82" lengthAdjust="spacingAndGlyphs" stroke="#ffffff" stroke-width="0.40">Margin %</text>
<text x="1169.04" y="527.90" font-family='"Liberation Sans", sans-serif' font-weight="400" font-size="28.34" fill="#1c1c1c" textLength="214.01" lengthAdjust="spacingAndGlyphs" stroke="#ffffff" stroke-width="0.40">Total Customers</text>
<circle cx="1171" cy="496.9" r="13.2" fill="#f0d146"/>
<text x="1166.06" y="502.50" font-family='"Liberation Sans", sans-serif' font-weight="400" font-size="16.72" fill="#333" textLength="10.38" lengthAdjust="spacingAndGlyphs" stroke="#ffffff" stroke-width="0.40">2</text>
<path d="M32.7 574.1H1389.5V578.6H34.1Z" stroke="none" stroke-width="1.00" fill="#744bc3"/>
<rect x="412.40" y="574.10" width="1.20" height="4.50" fill="#b8a4e0" stroke="none" stroke-width="1.00" rx="0.00"/>
<rect x="657.10" y="574.10" width="1.20" height="4.50" fill="#b8a4e0" stroke="none" stroke-width="1.00" rx="0.00"/>
<rect x="901.10" y="574.10" width="1.20" height="4.50" fill="#b8a4e0" stroke="none" stroke-width="1.00" rx="0.00"/>
<rect x="1144.90" y="574.10" width="1.20" height="4.50" fill="#b8a4e0" stroke="none" stroke-width="1.00" rx="0.00"/>
<text x="42.47" y="615.80" font-family='"Liberation Sans", sans-serif' font-weight="400" font-size="30.23" fill="#1c1c1c" textLength="235.98" lengthAdjust="spacingAndGlyphs" stroke="#ffffff" stroke-width="0.40">Washers &amp; Dryers</text>
<text x="547.12" y="615.80" font-family='"Liberation Mono", monospace' font-weight="400" font-size="29.45" fill="#1c1c1c" textLength="98.57" lengthAdjust="spacingAndGlyphs">$1,580</text>
<text x="789.89" y="615.80" font-family='"Liberation Mono", monospace' font-weight="400" font-size="29.45" fill="#1c1c1c" textLength="99.97" lengthAdjust="spacingAndGlyphs">196.82</text>
<text x="1050.19" y="615.80" font-family='"Liberation Mono", monospace' font-weight="400" font-size="29.45" fill="#1c1c1c" textLength="83.62" lengthAdjust="spacingAndGlyphs">12.46</text>
<text x="1326.78" y="615.80" font-family='"Liberation Mono", monospace' font-weight="400" font-size="29.45" fill="#1c1c1c" textLength="51.66" lengthAdjust="spacingAndGlyphs">247</text>
<rect x="32.20" y="630.20" width="1357.30" height="55.03" fill="#eaf5fd" stroke="none" stroke-width="1.00" rx="0.00"/>
<rect x="412.50" y="630.20" width="1.00" height="55.03" fill="#f0f8fe" stroke="none" stroke-width="1.00" rx="0.00"/>
<rect x="657.20" y="630.20" width="1.00" height="55.03" fill="#f0f8fe" stroke="none" stroke-width="1.00" rx="0.00"/>
<rect x="901.20" y="630.20" width="1.00" height="55.03" fill="#f0f8fe" stroke="none" stroke-width="1.00" rx="0.00"/>
<rect x="1145.00" y="630.20" width="1.00" height="55.03" fill="#f0f8fe" stroke="none" stroke-width="1.00" rx="0.00"/>
<text x="40.15" y="668.70" font-family='"Liberation Sans", sans-serif' font-weight="400" font-size="30.23" fill="#1c1c1c" textLength="280.43" lengthAdjust="spacingAndGlyphs" stroke="#eaf5fd" stroke-width="0.40">Projectors &amp; Screens</text>
<text x="579.51" y="668.70" font-family='"Liberation Mono", monospace' font-weight="400" font-size="29.45" fill="#1c1c1c" textLength="66.24" lengthAdjust="spacingAndGlyphs">$973</text>
<text x="789.95" y="668.70" font-family='"Liberation Mono", monospace' font-weight="400" font-size="29.45" fill="#1c1c1c" textLength="99.75" lengthAdjust="spacingAndGlyphs">211.26</text>
<text x="1050.24" y="668.70" font-family='"Liberation Mono", monospace' font-weight="400" font-size="29.45" fill="#1c1c1c" textLength="83.74" lengthAdjust="spacingAndGlyphs">21.72</text>
<text x="1327.02" y="668.70" font-family='"Liberation Mono", monospace' font-weight="400" font-size="29.45" fill="#1c1c1c" textLength="51.19" lengthAdjust="spacingAndGlyphs">382</text>
<text x="40.09" y="724.13" font-family='"Liberation Sans", sans-serif' font-weight="400" font-size="30.23" fill="#1c1c1c" textLength="176.51" lengthAdjust="spacingAndGlyphs" stroke="#ffffff" stroke-width="0.40">Refrigerators</text>
<text x="579.51" y="724.13" font-family='"Liberation Mono", monospace' font-weight="400" font-size="29.45" fill="#1c1c1c" textLength="66.24" lengthAdjust="spacingAndGlyphs">$953</text>
<text x="771.08" y="724.13" font-family='"Liberation Mono", monospace' font-weight="400" font-size="29.45" fill="#1c1c1c" textLength="119.04" lengthAdjust="spacingAndGlyphs">-350.57</text>
<text x="1031.34" y="724.13" font-family='"Liberation Mono", monospace' font-weight="400" font-size="29.45" fill="#1c1c1c" textLength="102.89" lengthAdjust="spacingAndGlyphs">-36.77</text>
<text x="1327.05" y="724.13" font-family='"Liberation Mono", monospace' font-weight="400" font-size="29.45" fill="#1c1c1c" textLength="50.51" lengthAdjust="spacingAndGlyphs">331</text>
<rect x="32.20" y="741.06" width="1357.30" height="55.03" fill="#eaf5fd" stroke="none" stroke-width="1.00" rx="0.00"/>
<rect x="412.50" y="741.06" width="1.00" height="55.03" fill="#f0f8fe" stroke="none" stroke-width="1.00" rx="0.00"/>
<rect x="657.20" y="741.06" width="1.00" height="55.03" fill="#f0f8fe" stroke="none" stroke-width="1.00" rx="0.00"/>
<rect x="901.20" y="741.06" width="1.00" height="55.03" fill="#f0f8fe" stroke="none" stroke-width="1.00" rx="0.00"/>
<rect x="1145.00" y="741.06" width="1.00" height="55.03" fill="#f0f8fe" stroke="none" stroke-width="1.00" rx="0.00"/>
<text x="40.09" y="779.56" font-family='"Liberation Sans", sans-serif' font-weight="400" font-size="30.23" fill="#1c1c1c" textLength="108.92" lengthAdjust="spacingAndGlyphs" stroke="#eaf5fd" stroke-width="0.40">Laptops</text>
<text x="579.51" y="779.56" font-family='"Liberation Mono", monospace' font-weight="400" font-size="29.45" fill="#1c1c1c" textLength="66.31" lengthAdjust="spacingAndGlyphs">$668</text>
<text x="789.89" y="779.56" font-family='"Liberation Mono", monospace' font-weight="400" font-size="29.45" fill="#1c1c1c" textLength="100.18" lengthAdjust="spacingAndGlyphs">181.17</text>
<text x="1050.25" y="779.56" font-family='"Liberation Mono", monospace' font-weight="400" font-size="29.45" fill="#1c1c1c" textLength="83.09" lengthAdjust="spacingAndGlyphs">27.11</text>
<text x="1327.05" y="779.56" font-family='"Liberation Mono", monospace' font-weight="400" font-size="29.45" fill="#1c1c1c" textLength="50.51" lengthAdjust="spacingAndGlyphs">301</text>
<text x="41.07" y="834.99" font-family='"Liberation Sans", sans-serif' font-weight="400" font-size="30.23" fill="#1c1c1c" textLength="226.32" lengthAdjust="spacingAndGlyphs" stroke="#ffffff" stroke-width="0.40">Coffee Machines</text>
<text x="579.51" y="834.99" font-family='"Liberation Mono", monospace' font-weight="400" font-size="29.45" fill="#1c1c1c" textLength="66.28" lengthAdjust="spacingAndGlyphs">$476</text>
<text x="787.26" y="834.99" font-family='"Liberation Mono", monospace' font-weight="400" font-size="29.45" fill="#1c1c1c" textLength="102.45" lengthAdjust="spacingAndGlyphs">-11.15</text>
<text x="1047.53" y="834.99" font-family='"Liberation Mono", monospace' font-weight="400" font-size="29.45" fill="#1c1c1c" textLength="85.92" lengthAdjust="spacingAndGlyphs">-2.34</text>
<text x="1326.82" y="834.99" font-family='"Liberation Mono", monospace' font-weight="400" font-size="29.45" fill="#1c1c1c" textLength="50.74" lengthAdjust="spacingAndGlyphs">251</text>
<rect x="32.20" y="851.92" width="1357.30" height="55.03" fill="#eaf5fd" stroke="none" stroke-width="1.00" rx="0.00"/>
<rect x="412.50" y="851.92" width="1.00" height="55.03" fill="#f0f8fe" stroke="none" stroke-width="1.00" rx="0.00"/>
<rect x="657.20" y="851.92" width="1.00" height="55.03" fill="#f0f8fe" stroke="none" stroke-width="1.00" rx="0.00"/>
<rect x="901.20" y="851.92" width="1.00" height="55.03" fill="#f0f8fe" stroke="none" stroke-width="1.00" rx="0.00"/>
<rect x="1145.00" y="851.92" width="1.00" height="55.03" fill="#f0f8fe" stroke="none" stroke-width="1.00" rx="0.00"/>
<text x="40.17" y="890.42" font-family='"Liberation Sans", sans-serif' font-weight="400" font-size="30.23" fill="#1c1c1c" textLength="88.80" lengthAdjust="spacingAndGlyphs" stroke="#eaf5fd" stroke-width="0.40">Lamps</text>
<text x="579.52" y="890.42" font-family='"Liberation Mono", monospace' font-weight="400" font-size="29.45" fill="#1c1c1c" textLength="65.81" lengthAdjust="spacingAndGlyphs">$471</text>
<text x="790.18" y="890.42" font-family='"Liberation Mono", monospace' font-weight="400" font-size="29.45" fill="#1c1c1c" textLength="99.05" lengthAdjust="spacingAndGlyphs">340.31</text>
<text x="1050.05" y="890.42" font-family='"Liberation Mono", monospace' font-weight="400" font-size="29.45" fill="#1c1c1c" textLength="83.80" lengthAdjust="spacingAndGlyphs">72.28</text>
<text x="1327.03" y="890.42" font-family='"Liberation Mono", monospace' font-weight="400" font-size="29.45" fill="#1c1c1c" textLength="51.04" lengthAdjust="spacingAndGlyphs">548</text>
<text x="42.47" y="945.85" font-family='"Liberation Sans", sans-serif' font-weight="400" font-size="30.23" fill="#1c1c1c" textLength="189.89" lengthAdjust="spacingAndGlyphs" stroke="#ffffff" stroke-width="0.40">Water Heaters</text>
<text x="579.51" y="945.85" font-family='"Liberation Mono", monospace' font-weight="400" font-size="29.45" fill="#1c1c1c" textLength="66.24" lengthAdjust="spacingAndGlyphs">$443</text>
<text x="806.18" y="945.85" font-family='"Liberation Mono", monospace' font-weight="400" font-size="29.45" fill="#1c1c1c" textLength="83.65" lengthAdjust="spacingAndGlyphs">94.59</text>
<text x="1050.25" y="945.85" font-family='"Liberation Mono", monospace' font-weight="400" font-size="29.45" fill="#1c1c1c" textLength="83.16" lengthAdjust="spacingAndGlyphs">21.34</text>
<text x="1326.73" y="945.85" font-family='"Liberation Mono", monospace' font-weight="400" font-size="29.45" fill="#1c1c1c" textLength="51.49" lengthAdjust="spacingAndGlyphs">152</text>
<rect x="32.20" y="962.78" width="1357.30" height="55.03" fill="#eaf5fd" stroke="none" stroke-width="1.00" rx="0.00"/>
<rect x="412.50" y="962.78" width="1.00" height="55.03" fill="#f0f8fe" stroke="none" stroke-width="1.00" rx="0.00"/>
<rect x="657.20" y="962.78" width="1.00" height="55.03" fill="#f0f8fe" stroke="none" stroke-width="1.00" rx="0.00"/>
<rect x="901.20" y="962.78" width="1.00" height="55.03" fill="#f0f8fe" stroke="none" stroke-width="1.00" rx="0.00"/>
<rect x="1145.00" y="962.78" width="1.00" height="55.03" fill="#f0f8fe" stroke="none" stroke-width="1.00" rx="0.00"/>
<text x="39.97" y="1001.28" font-family='"Liberation Sans", sans-serif' font-weight="400" font-size="30.23" fill="#1c1c1c" textLength="122.78" lengthAdjust="spacingAndGlyphs" stroke="#eaf5fd" stroke-width="0.40">Monitors</text>
<text x="579.52" y="1001.28" font-family='"Liberation Mono", monospace' font-weight="400" font-size="29.45" fill="#1c1c1c" textLength="65.88" lengthAdjust="spacingAndGlyphs">$424</text>
<text x="803.38" y="1001.28" font-family='"Liberation Mono", monospace' font-weight="400" font-size="29.45" fill="#1c1c1c" textLength="86.78" lengthAdjust="spacingAndGlyphs">-0.77</text>
<text x="1047.50" y="1001.28" font-family='"Liberation Mono", monospace' font-weight="400" font-size="29.45" fill="#1c1c1c" textLength="86.39" lengthAdjust="spacingAndGlyphs">-0.18</text>
<text x="1327.02" y="1001.28" font-family='"Liberation Mono", monospace' font-weight="400" font-size="29.45" fill="#1c1c1c" textLength="51.42" lengthAdjust="spacingAndGlyphs">327</text>
<text x="40.10" y="1056.71" font-family='"Liberation Sans", sans-serif' font-weight="400" font-size="30.23" fill="#1c1c1c" textLength="160.70" lengthAdjust="spacingAndGlyphs" stroke="#ffffff" stroke-width="0.40">Microwaves</text>
<text x="579.51" y="1056.71" font-family='"Liberation Mono", monospace' font-weight="400" font-size="29.45" fill="#1c1c1c" textLength="66.41" lengthAdjust="spacingAndGlyphs">$319</text>
<text x="806.09" y="1056.71" font-family='"Liberation Mono", monospace' font-weight="400" font-size="29.45" fill="#1c1c1c" textLength="83.52" lengthAdjust="spacingAndGlyphs">14.30</text>
<text x="1067.00" y="1056.71" font-family='"Liberation Mono", monospace' font-weight="400" font-size="29.45" fill="#1c1c1c" textLength="66.84" lengthAdjust="spacingAndGlyphs">4.48</text>
<text x="1327.03" y="1056.71" font-family='"Liberation Mono", monospace' font-weight="400" font-size="29.45" fill="#1c1c1c" textLength="50.97" lengthAdjust="spacingAndGlyphs">375</text>
<rect x="32.20" y="1073.64" width="1357.30" height="55.03" fill="#eaf5fd" stroke="none" stroke-width="1.00" rx="0.00"/>
<rect x="412.50" y="1073.64" width="1.00" height="55.03" fill="#f0f8fe" stroke="none" stroke-width="1.00" rx="0.00"/>
<rect x="657.20" y="1073.64" width="1.00" height="55.03" fill="#f0f8fe" stroke="none" stroke-width="1.00" rx="0.00"/>
<rect x="901.20" y="1073.64" width="1.00" height="55.03" fill="#f0f8fe" stroke="none" stroke-width="1.00" rx="0.00"/>
<rect x="1145.00" y="1073.64" width="1.00" height="55.03" fill="#f0f8fe" stroke="none" stroke-width="1.00" rx="0.00"/>
<text x="40.14" y="1112.14" font-family='"Liberation Sans", sans-serif' font-weight="400" font-size="30.23" fill="#1c1c1c" textLength="125.15" lengthAdjust="spacingAndGlyphs" stroke="#eaf5fd" stroke-width="0.40">Desktops</text>
<text x="579.51" y="1112.14" font-family='"Liberation Mono", monospace' font-weight="400" font-size="29.45" fill="#1c1c1c" textLength="66.28" lengthAdjust="spacingAndGlyphs">$266</text>
<text x="806.14" y="1112.14" font-family='"Liberation Mono", monospace' font-weight="400" font-size="29.45" fill="#1c1c1c" textLength="83.74" lengthAdjust="spacingAndGlyphs">23.22</text>
<text x="1066.58" y="1112.14" font-family='"Liberation Mono", monospace' font-weight="400" font-size="29.45" fill="#1c1c1c" textLength="67.41" lengthAdjust="spacingAndGlyphs">8.72</text>
<text x="1326.76" y="1112.14" font-family='"Liberation Mono", monospace' font-weight="400" font-size="29.45" fill="#1c1c1c" textLength="50.88" lengthAdjust="spacingAndGlyphs">184</text>
<text x="42.54" y="1167.57" font-family='"Liberation Sans", sans-serif' font-weight="400" font-size="30.23" fill="#1c1c1c" textLength="217.56" lengthAdjust="spacingAndGlyphs" stroke="#ffffff" stroke-width="0.40">Air Conditioners</text>
<text x="579.51" y="1167.57" font-family='"Liberation Mono", monospace' font-weight="400" font-size="29.45" fill="#1c1c1c" textLength="66.24" lengthAdjust="spacingAndGlyphs">$253</text>
<text x="789.89" y="1167.57" font-family='"Liberation Mono", monospace' font-weight="400" font-size="29.45" fill="#1c1c1c" textLength="99.97" lengthAdjust="spacingAndGlyphs">137.82</text>
<text x="1050.47" y="1167.57" font-family='"Liberation Mono", monospace' font-weight="400" font-size="29.45" fill="#1c1c1c" textLength="82.93" lengthAdjust="spacingAndGlyphs">54.54</text>
<text x="1326.80" y="1167.57" font-family='"Liberation Mono", monospace' font-weight="400" font-size="29.45" fill="#1c1c1c" textLength="51.25" lengthAdjust="spacingAndGlyphs">216</text>
<rect x="32.20" y="1184.50" width="1357.30" height="55.03" fill="#eaf5fd" stroke="none" stroke-width="1.00" rx="0.00"/>
<rect x="412.50" y="1184.50" width="1.00" height="55.03" fill="#f0f8fe" stroke="none" stroke-width="1.00" rx="0.00"/>
<rect x="657.20" y="1184.50" width="1.00" height="55.03" fill="#f0f8fe" stroke="none" stroke-width="1.00" rx="0.00"/>
<rect x="901.20" y="1184.50" width="1.00" height="55.03" fill="#f0f8fe" stroke="none" stroke-width="1.00" rx="0.00"/>
<rect x="1145.00" y="1184.50" width="1.00" height="55.03" fill="#f0f8fe" stroke="none" stroke-width="1.00" rx="0.00"/>
<text x="40.19" y="1223.00" font-family='"Liberation Sans", sans-serif' font-weight="400" font-size="30.23" fill="#1c1c1c" textLength="326.42" lengthAdjust="spacingAndGlyphs" stroke="#eaf5fd" stroke-width="0.40">Printers, Scanners &amp; Fax</text>
<text x="579.51" y="1223.00" font-family='"Liberation Mono", monospace' font-weight="400" font-size="29.45" fill="#1c1c1c" textLength="66.41" lengthAdjust="spacingAndGlyphs">$219</text>
<text x="822.60" y="1223.00" font-family='"Liberation Mono", monospace' font-weight="400" font-size="29.45" fill="#1c1c1c" textLength="67.24" lengthAdjust="spacingAndGlyphs">0.59</text>
<text x="1066.70" y="1223.00" font-family='"Liberation Mono", monospace' font-weight="400" font-size="29.45" fill="#1c1c1c" textLength="67.50" lengthAdjust="spacingAndGlyphs">0.27</text>
<text x="1327.02" y="1223.00" font-family='"Liberation Mono", monospace' font-weight="400" font-size="29.45" fill="#1c1c1c" textLength="51.15" lengthAdjust="spacingAndGlyphs">379</text>
<text x="41.10" y="1278.43" font-family='"Liberation Sans", sans-serif' font-weight="400" font-size="30.23" fill="#1c1c1c" textLength="310.96" lengthAdjust="spacingAndGlyphs" stroke="#ffffff" stroke-width="0.40">Computers Accessories</text>
<text x="579.51" y="1278.43" font-family='"Liberation Mono", monospace' font-weight="400" font-size="29.45" fill="#1c1c1c" textLength="66.31" lengthAdjust="spacingAndGlyphs">$128</text>
<text x="787.26" y="1278.43" font-family='"Liberation Mono", monospace' font-weight="400" font-size="29.45" fill="#1c1c1c" textLength="102.45" lengthAdjust="spacingAndGlyphs">-18.23</text>
<text x="1031.34" y="1278.43" font-family='"Liberation Mono", monospace' font-weight="400" font-size="29.45" fill="#1c1c1c" textLength="102.89" lengthAdjust="spacingAndGlyphs">-14.27</text>
<text x="1326.71" y="1278.43" font-family='"Liberation Mono", monospace' font-weight="400" font-size="29.45" fill="#1c1c1c" textLength="50.92" lengthAdjust="spacingAndGlyphs">654</text>
<rect x="32.20" y="1295.36" width="1357.30" height="55.03" fill="#eaf5fd" stroke="none" stroke-width="1.00" rx="0.00"/>
<rect x="412.50" y="1295.36" width="1.00" height="55.03" fill="#f0f8fe" stroke="none" stroke-width="1.00" rx="0.00"/>
<rect x="657.20" y="1295.36" width="1.00" height="55.03" fill="#f0f8fe" stroke="none" stroke-width="1.00" rx="0.00"/>
<rect x="901.20" y="1295.36" width="1.00" height="55.03" fill="#f0f8fe" stroke="none" stroke-width="1.00" rx="0.00"/>
<rect x="1145.00" y="1295.36" width="1.00" height="55.03" fill="#f0f8fe" stroke="none" stroke-width="1.00" rx="0.00"/>
<text x="40.30" y="1333.86" font-family='"Liberation Sans", sans-serif' font-weight="400" font-size="30.23" fill="#1c1c1c" textLength="62.31" lengthAdjust="spacingAndGlyphs" stroke="#eaf5fd" stroke-width="0.40">Fans</text>
<text x="595.70" y="1333.86" font-family='"Liberation Mono", monospace' font-weight="400" font-size="29.45" fill="#1c1c1c" textLength="50.06" lengthAdjust="spacingAndGlyphs">$83</text>
<text x="787.28" y="1333.86" font-family='"Liberation Mono", monospace' font-weight="400" font-size="29.45" fill="#1c1c1c" textLength="102.06" lengthAdjust="spacingAndGlyphs">-38.64</text>
<text x="1031.36" y="1333.86" font-family='"Liberation Mono", monospace' font-weight="400" font-size="29.45" fill="#1c1c1c" textLength="102.45" lengthAdjust="spacingAndGlyphs">-46.35</text>
<text x="1326.78" y="1333.86" font-family='"Liberation Mono", monospace' font-weight="400" font-size="29.45" fill="#1c1c1c" textLength="51.66" lengthAdjust="spacingAndGlyphs">287</text>
<circle cx="438.9" cy="657" r="13" fill="#4a9be0"/>
<text x="434.44" y="662.50" font-family='"Liberation Sans", sans-serif' font-weight="400" font-size="16.72" fill="#ffffff" textLength="7.74" lengthAdjust="spacingAndGlyphs">1</text>
<circle cx="374.6" cy="1264.2" r="13.1" fill="#56a45a"/>
<text x="369.86" y="1269.80" font-family='"Liberation Sans", sans-serif' font-weight="400" font-size="16.72" fill="#ffffff" textLength="9.38" lengthAdjust="spacingAndGlyphs">3</text>
<rect x="2.00" y="1517.80" width="2817.30" height="1.80" fill="#d8d8d8" stroke="none" stroke-width="1.00" rx="0.00"/>
<text x="1.62" y="1558.00" font-family='"Liberation Sans", sans-serif' font-weight="400" font-size="27.62" fill="#333" textLength="160.83" lengthAdjust="spacingAndGlyphs" stroke="#ffffff" stroke-width="0.40">Total rows: 14</text>
<text x="1228.88" y="1558.20" font-family='"Liberation Sans", sans-serif' font-weight="400" font-size="27.04" fill="#333" textLength="180.77" lengthAdjust="spacingAndGlyphs" stroke="#ffffff" stroke-width="0.40">Rows per page:</text>
<rect x="1421.20" y="1530.20" width="113.20" height="41.50" fill="#ffffff" stroke="#d8d8d8" stroke-width="2.00" rx="0.00"/>
<text x="1444.95" y="1561.80" font-family='"Liberation Sans", sans-serif' font-weight="400" font-size="27.62" fill="#222" textLength="28.78" lengthAdjust="spacingAndGlyphs" stroke="#ffffff" stroke-width="0.40">All</text>
<path d="M1486.50 1544.00L1498.90 1557.00L1511.30 1544.00" stroke="#222" stroke-width="1.60" fill="none" stroke-linecap="butt" stroke-linejoin="miter"/>
<rect x="2559.00" y="1550.80" width="22.00" height="2.00" fill="#222" stroke="none" stroke-width="1.00" rx="0.00"/>
<rect x="2601.50" y="1533.20" width="118.80" height="41.20" fill="#ffffff" stroke="#d8d8d8" stroke-width="2.00" rx="0.00"/>
<text x="2627.66" y="1563.90" font-family='"Liberation Sans", sans-serif' font-weight="400" font-size="28.05" fill="#222" textLength="42.54" lengthAdjust="spacingAndGlyphs" stroke="#ffffff" stroke-width="0.40">100</text>
<text x="2673.44" y="1563.90" font-family='"Liberation Sans", sans-serif' font-weight="400" font-size="28.05" fill="#222" textLength="21.53" lengthAdjust="spacingAndGlyphs" stroke="#ffffff" stroke-width="0.40">%</text>
<path d="M2734.4 1552.8H2757.7M2746 1541V1564.5" stroke="#222" stroke-width="2.00" fill="none"/>
<rect x="2780.70" y="1530.30" width="7.50" height="7.40" fill="#c8c8c8" stroke="none" stroke-width="1.00" rx="0.00"/>
<rect x="2795.70" y="1530.30" width="7.30" height="7.40" fill="#c8c8c8" stroke="none" stroke-width="1.00" rx="0.00"/>
<rect x="2780.70" y="1545.00" width="7.50" height="7.40" fill="#c8c8c8" stroke="none" stroke-width="1.00" rx="0.00"/>
<rect x="2779.30" y="1559.00" width="10.40" height="9.70" fill="#fb3535" stroke="none" stroke-width="1.00" rx="0.00"/>
<rect x="2794.00" y="1543.80" width="10.30" height="24.90" fill="#ffb400" stroke="none" stroke-width="1.00" rx="0.00"/>
<rect x="2809.00" y="1529.00" width="10.00" height="39.70" fill="#57d24b" stroke="none" stroke-width="1.00" rx="0.00"/>
<g filter="url(#pshadow)">
<rect x="2135.80" y="225.00" width="338.60" height="678.60" fill="#ffffff" stroke="#e0e0e0" stroke-width="1.40" rx="2.50"/>
</g>
<path d="M2167.5 250.5V265.5M2159.5 258.3H2177" stroke="#b7cce8" stroke-width="1.60" fill="none"/>
<path d="M2179 252.5H2190.5V275L2183 283.5H2161V268" stroke="#d0d0d0" stroke-width="1.80" fill="none" stroke-linejoin="miter"/>
<path d="M2183 283.5V275H2190.5" stroke="#d0d0d0" stroke-width="1.80" fill="none"/>
<text x="2248.25" y="277.70" font-family='"Liberation Sans", sans-serif' font-weight="400" font-size="27.33" fill="#c6c6c6" textLength="174.35" lengthAdjust="spacingAndGlyphs">Add New Note</text>
<rect x="2136.50" y="308.20" width="337.50" height="1.60" fill="#dedede" stroke="none" stroke-width="1.00" rx="0.00"/>
<rect x="2155.00" y="337.70" width="60.00" height="29.20" fill="#ffffff" stroke="#666" stroke-width="1.90" rx="14.60"/>
<circle cx="2171.3" cy="352.3" r="8.6" fill="#666"/>
<text x="2246.04" y="362.60" font-family='"Liberation Sans", sans-serif' font-weight="400" font-size="26.74" fill="#333" textLength="108.79" lengthAdjust="spacingAndGlyphs" stroke="#ffffff" stroke-width="0.40">Footnote</text>
<rect x="2155.00" y="426.50" width="60.00" height="29.20" fill="#ffffff" stroke="#666" stroke-width="1.90" rx="14.60"/>
<circle cx="2171.3" cy="441.1" r="8.6" fill="#666"/>
<text x="2246.08" y="451.40" font-family='"Liberation Sans", sans-serif' font-weight="400" font-size="26.74" fill="#333" textLength="171.17" lengthAdjust="spacingAndGlyphs" stroke="#ffffff" stroke-width="0.40">Notes Column</text>
<rect x="2155.00" y="515.10" width="60.00" height="29.20" fill="#ffffff" stroke="#666" stroke-width="1.90" rx="14.60"/>
<circle cx="2171.3" cy="529.7" r="8.6" fill="#666"/>
<text x="2246.08" y="540.00" font-family='"Liberation Sans", sans-serif' font-weight="400" font-size="26.74" fill="#333" textLength="171.40" lengthAdjust="spacingAndGlyphs" stroke="#ffffff" stroke-width="0.40">Hide All Notes</text>
<rect x="2155.00" y="603.90" width="60.00" height="29.20" fill="#ffffff" stroke="#666" stroke-width="1.90" rx="14.60"/>
<circle cx="2171.3" cy="618.5" r="8.6" fill="#666"/>
<text x="2246.05" y="628.80" font-family='"Liberation Sans", sans-serif' font-weight="400" font-size="26.74" fill="#333" textLength="161.57" lengthAdjust="spacingAndGlyphs" stroke="#ffffff" stroke-width="0.40">Marker Mode</text>
<text x="2246.97" y="709.00" font-family='"Liberation Sans", sans-serif' font-weight="400" font-size="27.04" fill="#c8c8c8" textLength="176.28" lengthAdjust="spacingAndGlyphs">Clear Markings</text>
<text x="2248.18" y="780.30" font-family='"Liberation Sans", sans-serif' font-weight="400" font-size="27.04" fill="#333" textLength="169.97" lengthAdjust="spacingAndGlyphs" stroke="#ffffff" stroke-width="0.40">View All Notes</text>
<rect x="2136.50" y="805.20" width="337.50" height="1.60" fill="#dedede" stroke="none" stroke-width="1.00" rx="0.00"/>
<rect x="2148.00" y="818.30" width="314.20" height="71.10" fill="#f3f3f3" stroke="#ff0000" stroke-width="3.40" rx="6.00"/>
<filter id="ish"><feGaussianBlur stdDeviation="2.2"/></filter>
<rect x="2151.50" y="821.50" width="307.20" height="64.70" fill="none" stroke="#cfcfcf" stroke-width="3.00" rx="4.00" filter="url(#ish)"/>
<rect x="2148.00" y="818.30" width="314.20" height="71.10" fill="none" stroke="#ff0000" stroke-width="3.40" rx="6.00"/>
<text x="2241.31" y="864.00" font-family='"Liberation Sans", sans-serif' font-weight="400" font-size="27.33" fill="#333" textLength="94.33" lengthAdjust="spacingAndGlyphs" stroke="#f3f3f3" stroke-width="0.40">Settings</text>
<rect x="2129.00" y="94.30" width="83.70" height="133.50" fill="none" stroke="#ff0000" stroke-width="4.20" rx="7.00"/></svg></body></html>
